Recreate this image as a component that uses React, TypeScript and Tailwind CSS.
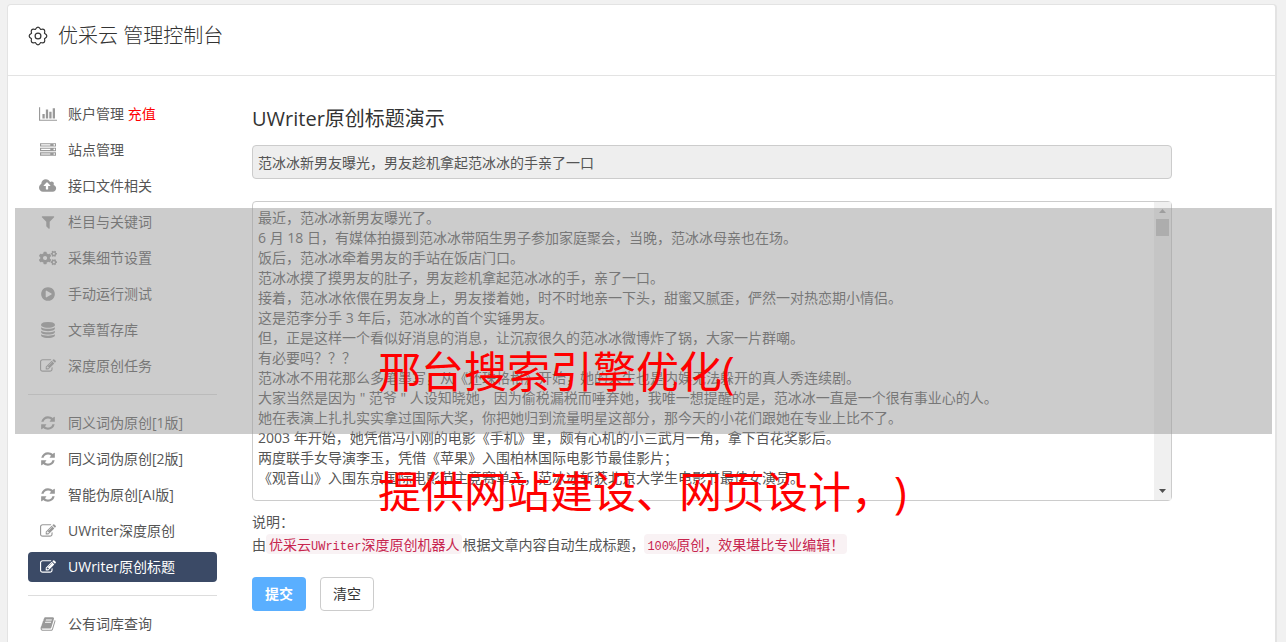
import React, { useState } from 'react';
import { FaCogs } from 'react-icons/fa';

interface IconProps {
  box?: string;
  d: string;
}

const Icon: React.FC<IconProps> = ({ box = '0 0 1792 1792', d }) => (
  <svg viewBox={box} className="h-4 w-auto" fill="currentColor" aria-hidden="true">
    <path d={d} />
  </svg>
);

const chart = <Icon box="0 0 2048 1792" d="M640 896v512h-256v-512h256zm384-512v1024h-256v-1024h256zm1024 1152v128h-2048v-1536h128v1408h1920zm-640-896v768h-256v-768h256zm384-384v1152h-256v-1152h256z" />;
const server = <Icon d="M128 1408h1024v-128h-1024v128zm0-512h1024v-128h-1024v128zm1568 448q0-40-28-68t-68-28-68 28-28 68 28 68 68 28 68-28 28-68zm-1568-960h1024v-128h-1024v128zm1568 448q0-40-28-68t-68-28-68 28-28 68 28 68 68 28 68-28 28-68zm0-512q0-40-28-68t-68-28-68 28-28 68 28 68 68 28 68-28 28-68zm96 832v384h-1792v-384h1792zm0-512v384h-1792v-384h1792zm0-512v384h-1792v-384h1792z" />;
const cloud = <Icon box="0 0 1920 1792" d="M1280 864q0-14-9-23l-352-352q-9-9-23-9t-23 9l-351 351q-10 12-10 24 0 14 9 23t23 9h224v352q0 13 9.5 22.5t22.5 9.5h192q13 0 22.5-9.5t9.5-22.5v-352h224q13 0 22.5-9.5t9.5-22.5zm640 288q0 159-112.5 271.5t-271.5 112.5h-1088q-185 0-316.5-131.5t-131.5-316.5q0-130 70-240t188-165q-2-30-2-43 0-212 150-362t362-150q156 0 285.5 87t188.5 231q71-62 166-62 106 0 181 75t75 181q0 76-41 138 130 31 213.5 135.5t83.5 238.5z" />;
const filter = <Icon d="M1595 295q17 41-14 70l-493 493v742q0 42-39 59-13 5-25 5-27 0-45-19l-256-256q-19-19-19-45v-486l-493-493q-31-29-14-70 17-39 59-39h1280q42 0 59 39z" />;
const play = <Icon d="M896 128q209 0 385.5 103t279.5 279.5 103 385.5-103 385.5-279.5 279.5-385.5 103-385.5-103-279.5-279.5-103-385.5 103-385.5 279.5-279.5 385.5-103zm384 823q32-18 32-55t-32-55l-544-320q-31-19-64-1-32 19-32 56v640q0 37 32 56 16 8 32 8 17 0 32-9z" />;
const database = <Icon d="M896 768q237 0 443-43t325-127v170q0 69-103 128t-280 93.5-385 34.5-385-34.5-280-93.5-103-128v-170q119 84 325 127t443 43zm0 768q237 0 443-43t325-127v170q0 69-103 128t-280 93.5-385 34.5-385-34.5-280-93.5-103-128v-170q119 84 325 127t443 43zm0-384q237 0 443-43t325-127v170q0 69-103 128t-280 93.5-385 34.5-385-34.5-280-93.5-103-128v-170q119 84 325 127t443 43zm0-1152q208 0 385 34.5t280 93.5 103 128v128q0 69-103 128t-280 93.5-385 34.5-385-34.5-280-93.5-103-128v-128q0-69 103-128t280-93.5 385-34.5z" />;
const edit = <Icon d="M888 1184l116-116-152-152-116 116v56h96v96h56zm440-720q-16-16-33 1l-350 350q-17 17-1 33t33-1l350-350q17-17 1-33zm80 594v190q0 119-84.5 203.5t-203.5 84.5h-832q-119 0-203.5-84.5t-84.5-203.5v-832q0-119 84.5-203.5t203.5-84.5h832q63 0 117 25 15 7 18 23 3 17-9 29l-49 49q-14 14-32 8-23-6-45-6h-832q-66 0-113 47t-47 113v832q0 66 47 113t113 47h832q66 0 113-47t47-113v-126q0-13 9-22l64-64q15-15 35-7t20 29zm-96-738l288 288-672 672h-288v-288zm444 132l-92 92-288-288 92-92q28-28 68-28t68 28l152 152q28 28 28 68t-28 68z" />;
const refresh = <Icon d="M1639 1056q0 5-1 7-64 268-268 434.5t-478 166.5q-146 0-282.5-55t-243.5-157l-129 129q-19 19-45 19t-45-19-19-45v-448q0-26 19-45t45-19h448q26 0 45 19t19 45-19 45l-137 137q71 66 161 102t187 36q134 0 250-65t186-179q11-17 53-117 8-23 30-23h192q13 0 22.5 9.5t9.5 22.5zm25-800v448q0 26-19 45t-45 19h-448q-26 0-45-19t-19-45 19-45l138-138q-148-137-349-137-134 0-250 65t-186 179q-11 17-53 117-8 23-30 23h-199q-13 0-22.5-9.5t-9.5-22.5v-7q65-268 270-434.5t480-166.5q146 0 284 55.5t245 156.5l130-129q19-19 45-19t45 19 19 45z" />;
const book = <Icon d="M1703 478q40 57 18 129l-275 906q-19 64-76.5 107.5t-122.5 43.5h-923q-77 0-148.5-53.5t-99.5-131.5q-24-67-2-127 0-4 3-27t4-37q1-8-3-21.5t-3-19.5q2-11 8-21t16.5-23.5 16.5-23.5q23-38 45-91.5t30-91.5q3-10 .5-30t-.5-28q3-11 17-28t17-23q21-36 42-92t25-90q1-9-2.5-32t.5-28q4-13 22-30.5t22-22.5q19-26 42.5-84.5t27.5-96.5q1-8-3-25.5t-2-26.5q2-8 9-18t18-23 17-21q8-12 16.5-30.5t15-35 16-36 19.5-32 26.5-23.5 36-11.5 47.5 5.5l-1 3q38-9 51-9h761q74 0 114 56t18 130l-274 906q-36 119-71.5 153.5t-128.5 34.5h-869q-27 0-38 15-11 16-1 43 24 70 144 70h923q29 0 56-15.5t35-41.5l300-987q7-22 5-57 38 15 59 43zm-1064 2q-4 13 2 22.5t20 9.5h608q13 0 25.5-9.5t16.5-22.5l21-64q4-13-2-22.5t-20-9.5h-608q-13 0-25.5 9.5t-16.5 22.5zm-83 256q-4 13 2 22.5t20 9.5h608q13 0 25.5-9.5t16.5-22.5l21-64q4-13-2-22.5t-20-9.5h-608q-13 0-25.5 9.5t-16.5 22.5z" />;

interface MenuItem {
  label: string;
  icon: React.ReactNode;
  extra?: string;
  active?: boolean;
}

const menuGroups: MenuItem[][] = [
  [
    { label: '账户管理', icon: chart, extra: '充值' },
    { label: '站点管理', icon: server },
    { label: '接口文件相关', icon: cloud },
    { label: '栏目与关键词', icon: filter },
    { label: '采集细节设置', icon: <FaCogs size={18} /> },
    { label: '手动运行测试', icon: play },
    { label: '文章暂存库', icon: database },
    { label: '深度原创任务', icon: edit },
  ],
  [
    { label: '同义词伪原创[1版]', icon: refresh },
    { label: '同义词伪原创[2版]', icon: refresh },
    { label: '智能伪原创[AI版]', icon: refresh },
    { label: 'UWriter深度原创', icon: edit },
    { label: 'UWriter原创标题', icon: edit, active: true },
  ],
  [{ label: '公有词库查询', icon: book }],
];

const article = `最近，范冰冰新男友曝光了。
6 月 18 日，有媒体拍摄到范冰冰带陌生男子参加家庭聚会，当晚，范冰冰母亲也在场。
饭后，范冰冰牵着男友的手站在饭店门口。
范冰冰摸了摸男友的肚子，男友趁机拿起范冰冰的手，亲了一口。
接着，范冰冰依偎在男友身上，男友搂着她，时不时地亲一下头，甜蜜又腻歪，俨然一对热恋期小情侣。
这是范李分手 3 年后，范冰冰的首个实锤男友。
但，正是这样一个看似好消息的消息，让沉寂很久的范冰冰微博炸了锅，大家一片群嘲。
有必要吗？？？
范冰冰不用花那么多笔墨写，从《还珠格格》开始，她的人生也是内娱无法躲开的真人秀连续剧。
大家当然是因为 " 范爷 " 人设知晓她，因为偷税漏税而唾弃她，我唯一想提醒的是，范冰冰一直是一个很有事业心的人。
她在表演上扎扎实实拿过国际大奖，你把她归到流量明星这部分，那今天的小花们跟她在专业上比不了。
2003 年开始，她凭借冯小刚的电影《手机》里，颇有心机的小三武月一角，拿下百花奖影后。
两度联手女导演李玉，凭借《苹果》入围柏林国际电影节最佳影片；
《观音山》入围东京国际电影节主竞赛单元，范冰冰斩获北京大学生电影节最佳女演员。`;

const Sidebar: React.FC = () => (
  <nav className="flex w-[189px] shrink-0 flex-col gap-1.5">
    {menuGroups.map((group, index) => (
      <React.Fragment key={index}>
        {index > 0 && <hr className="my-[7px] border-[#ddd]" />}
        {group.map((item) => (
          <a
            key={item.label}
            href="#"
            className={`flex h-[30px] items-center gap-2.5 rounded-sm px-2.5 text-sm ${
              item.active ? 'bg-[#3b4a66] text-white' : 'text-[#555]'
            }`}
          >
            <span className={`flex w-5 shrink-0 justify-center ${item.active ? 'text-white' : 'text-[#999]'}`}>
              {item.icon}
            </span>
            <span>
              {item.label}
              {item.extra && <span className="text-[#f00]"> {item.extra}</span>}
            </span>
          </a>
        ))}
      </React.Fragment>
    ))}
  </nav>
);

const TitleForm: React.FC = () => {
  const [title, setTitle] = useState('范冰冰新男友曝光，男友趁机拿起范冰冰的手亲了一口');
  const [content, setContent] = useState(article);

  const handleClear = () => {
    setTitle('');
    setContent('');
  };

  return (
    <form className="min-w-0 flex-1 text-sm text-[#555]" onSubmit={(e) => e.preventDefault()}>
      <h2 className="pt-1.5 text-xl leading-7 text-[#333]">UWriter原创标题演示</h2>
      <input
        type="text"
        aria-label="标题"
        readOnly
        value={title}
        className="mt-3 block h-[34px] w-full rounded border border-[#ccc] bg-[#eee] px-[5px] outline-none"
      />
      <div className="relative mt-[22px]">
        <textarea
          aria-label="文章内容"
          value={content}
          onChange={(e) => setContent(e.target.value)}
          className="block h-[300px] w-full resize-none overflow-hidden rounded border border-[#ccc] bg-white py-1.5 pl-[5px] pr-6 leading-5 outline-none"
        />
        {/* Scrollbar */}
        <div className="absolute inset-y-px right-px flex w-[17px] flex-col items-center bg-[#f0f0f0]">
          <svg viewBox="0 0 17 17" className="size-[17px]" fill="#a3a3a3" aria-hidden="true">
            <path d="M5 11h7l-3.5-4z" />
          </svg>
          <div className="h-[17px] w-[13px] bg-[#c1c1c1]" />
          <svg viewBox="0 0 17 17" className="mt-auto size-[17px]" fill="#505050" aria-hidden="true">
            <path d="M5 6h7l-3.5 4z" />
          </svg>
        </div>
      </div>
      <div className="mt-[9px] leading-[23px]">
        <p>说明：</p>
        <p>
          由
          <code className="rounded bg-[#f9f2f4] px-[3px] font-[Noto_Sans_CJK_SC,sans-serif] text-[#c7254e]">
            优采云<span className="font-[Liberation_Mono,monospace] text-xs">UWriter</span>深度原创机器人
          </code>
          根据文章内容自动生成标题，
          <code className="rounded bg-[#f9f2f4] px-[3px] font-[Noto_Sans_CJK_SC,sans-serif] text-[#c7254e]">
            <span className="font-[Liberation_Mono,monospace] text-xs">100%</span>原创，效果堪比专业编辑！
          </code>
        </p>
      </div>
      <div className="mt-[21px] flex gap-3.5">
        <button type="submit" className="h-[34px] w-[54px] rounded-sm bg-[#5aafff] font-bold text-white">
          提交
        </button>
        <button
          type="button"
          onClick={handleClear}
          className="h-[34px] w-[54px] rounded-sm border border-[#ccc] bg-white text-[#333]"
        >
          清空
        </button>
      </div>
    </form>
  );
};

export default function App() {
  return (
    <div className="relative flex min-h-screen bg-[#f1f1f1] pl-[7px] pr-[9px] pt-1 font-[Open_Sans,Noto_Sans_CJK_SC,sans-serif]">
      <div className="flex-1 rounded-t border-l border-r-2 border-t border-[#e3e3e3] bg-white">
        <header className="flex h-[71px] items-center gap-2.5 border-b border-[#e3e3e3] pl-5 pr-[103px] pb-2 text-[#333]">
          <svg viewBox="0 0 20 20" className="size-5" fill="none" stroke="currentColor" strokeWidth="1.2" aria-hidden="true">
            <circle cx="10" cy="10" r="2.9" />
            <path
              strokeLinejoin="round"
              d="M7.3 3.5Q10-1.2 12.7 3.5Q17.9 2.1 16.5 7.3Q21.2 10 16.5 12.7Q17.9 17.9 12.7 16.5Q10 21.2 7.3 16.5Q2.1 17.9 3.5 12.7Q-1.2 10 3.5 7.3Q2.1 2.1 7.3 3.5Z"
            />
          </svg>
          <h1 className="text-xl font-light">优采云 管理控制台</h1>
        </header>
        <div className="flex gap-[35px] pl-5 pr-[103px] pt-[23px]">
          <Sidebar />
          <TitleForm />
        </div>
      </div>

      {/* Banner over the page */}
      <div className="pointer-events-none absolute left-[15px] right-3.5 top-52 h-[226px] bg-[#999]/50" />
      <div className="pointer-events-none absolute left-[378px] right-3.5 top-[312px] text-[43px] leading-[120px] text-[#f00] [text-spacing-trim:space-all]">
        <p>邢台搜索引擎优化(</p>
        <p>提供网站建设、网页设计，)</p>
      </div>
    </div>
  );
}
